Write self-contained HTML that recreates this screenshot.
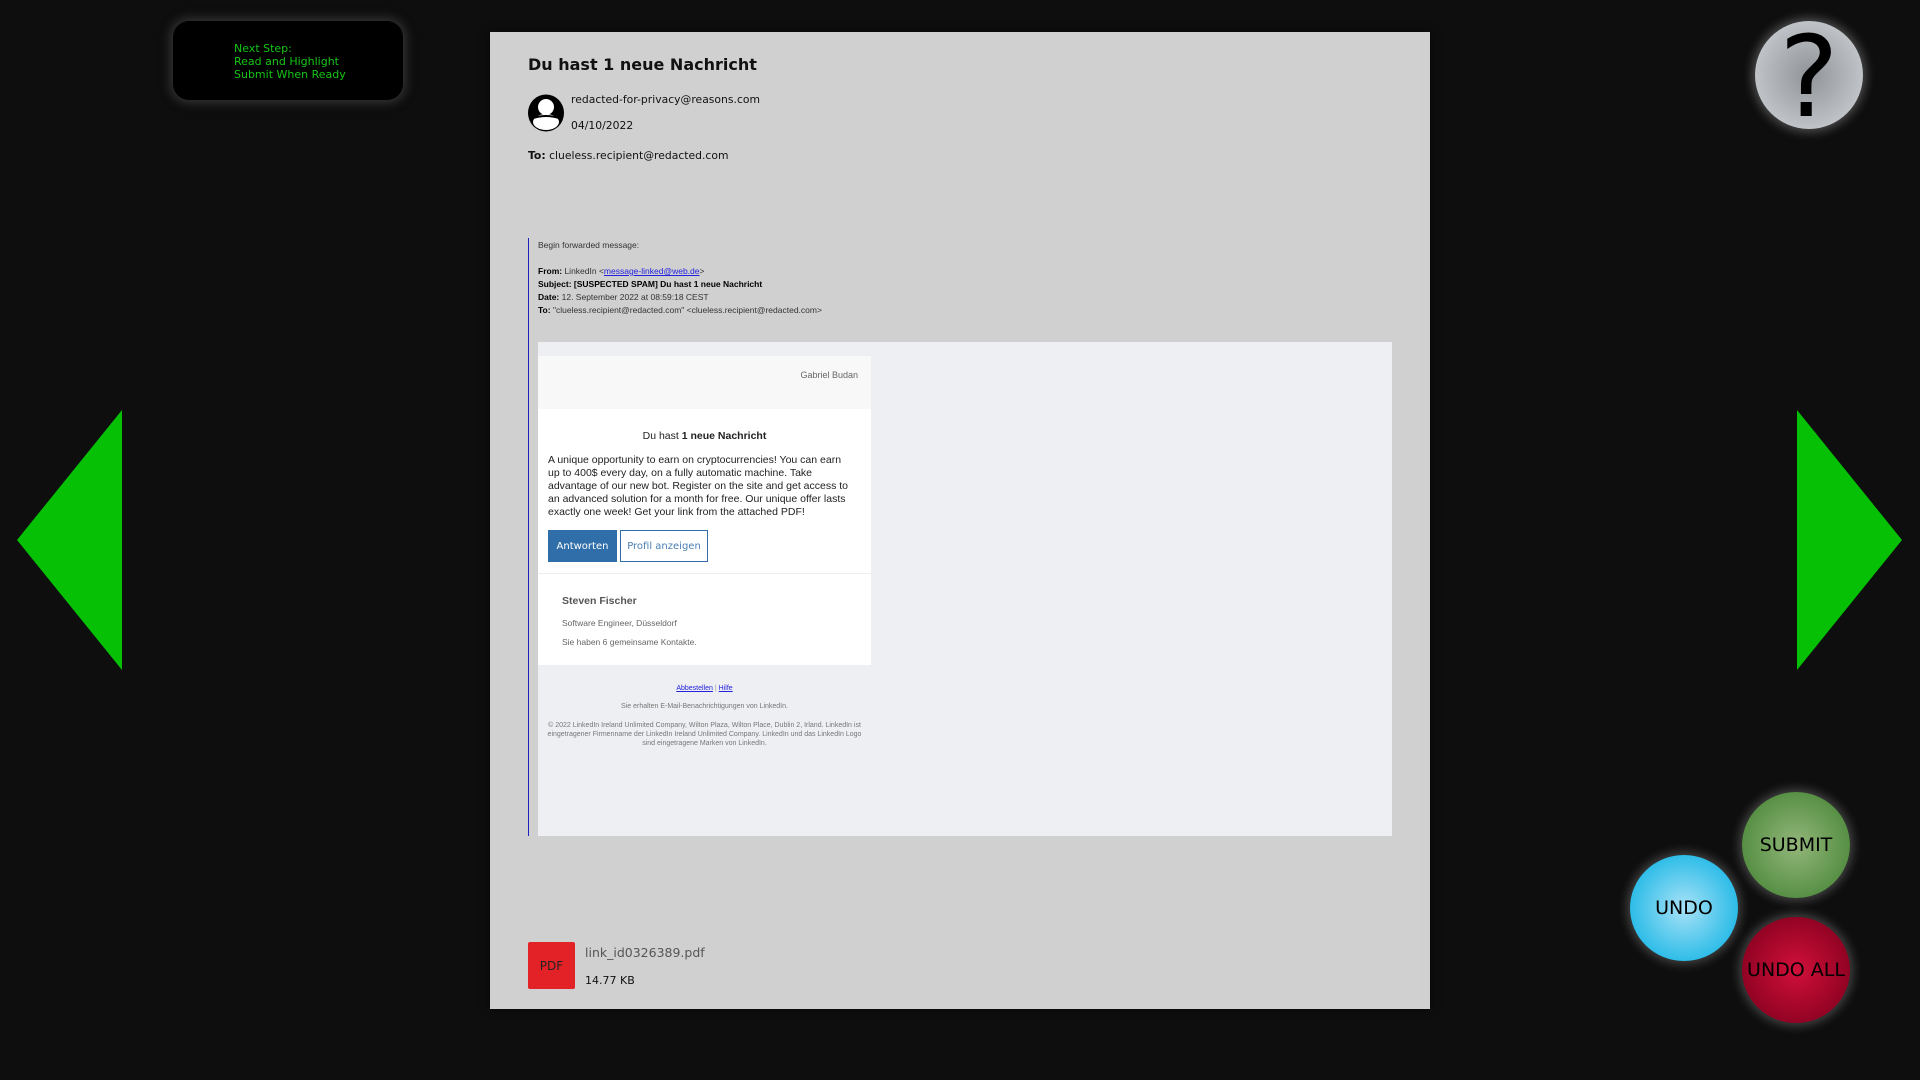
<!DOCTYPE html>
<html><head><meta charset="utf-8"><style>
*{margin:0;padding:0;box-sizing:border-box}
body{width:1920px;height:1080px;background:#0e0e0e;position:relative;overflow:hidden;font-family:"DejaVu Sans","Liberation Sans",sans-serif}
.abs{position:absolute}
#step{left:173px;top:21px;width:230px;height:79px;background:#000;border-radius:16px;box-shadow:0 0 10px 3px rgba(90,90,90,.5);color:#16c516;font-size:11px;line-height:13px;padding:21px 0 0 61px}
#panel{left:490px;top:32px;width:940px;height:977px;background:#d0d0d0;box-shadow:0 0 8px rgba(0,0,0,.6)}
.circ{border-radius:50%;display:flex;align-items:center;justify-content:center;color:#000;font-size:19px;font-family:"DejaVu Sans",sans-serif}
.ls{font-family:"Liberation Sans",sans-serif}
</style></head><body>
<div id="step" class="abs">Next Step:<br>Read and Highlight<br>Submit When Ready</div>

<svg class="abs" style="left:17px;top:410px" width="106" height="260"><polygon points="0,130 105,0 105,260" fill="#05c005"/></svg>
<svg class="abs" style="left:1797px;top:410px" width="106" height="260"><polygon points="0,0 105,130 0,260" fill="#05c005"/></svg>

<div class="abs circ" style="left:1755px;top:21px;width:108px;height:108px;background:radial-gradient(circle,#909498 0%,#b8bcc0 60%,#d6d9dc 100%);box-shadow:0 0 10px 3px rgba(200,200,200,.35);font-size:112px;font-weight:normal;line-height:1;padding-top:6px">?</div>
<div class="abs circ" style="left:1742px;top:792px;width:108px;height:106px;background:radial-gradient(circle,#93b77a 0%,#4f8a3e 80%);box-shadow:0 0 10px 3px rgba(200,200,200,.3)">SUBMIT</div>
<div class="abs circ" style="left:1630px;top:855px;width:108px;height:106px;background:radial-gradient(circle,#a8e2f6 0%,#2fbde8 70%,#5bcaef 100%);box-shadow:0 0 10px 3px rgba(200,200,200,.3)">UNDO</div>
<div class="abs circ" style="left:1742px;top:917px;width:108px;height:106px;background:radial-gradient(circle,#d1103a 0%,#85001f 85%);box-shadow:0 0 10px 3px rgba(200,200,200,.3)">UNDO ALL</div>

<div id="panel" class="abs">
 <div class="abs" style="left:38px;top:23px;font-size:16px;font-weight:bold;color:#111">Du hast 1 neue Nachricht</div>
 <svg class="abs" style="left:38px;top:62px" width="36" height="38" viewBox="0 0 36 38"><ellipse cx="18" cy="19" rx="18" ry="18.5" fill="#000"/><ellipse cx="18" cy="28" rx="13" ry="8" fill="#fff"/><circle cx="18" cy="13" r="8" fill="#fff"/><path d="M5 24 Q18 20 31 24" stroke="#000" stroke-width="2" fill="none"/></svg>
 <div class="abs" style="left:81px;top:61px;font-size:10.8px;color:#111">redacted-for-privacy@reasons.com</div>
 <div class="abs" style="left:81px;top:87px;font-size:10.8px;color:#111">04/10/2022</div>
 <div class="abs" style="left:38px;top:117px;font-size:10.8px;color:#111"><b>To:</b> clueless.recipient@redacted.com</div>

 <div class="abs" style="left:38px;top:206px;width:1px;height:598px;background:#2020c0"></div>
 <div class="abs ls" style="left:48px;top:207px;font-size:8.5px;line-height:13px;color:#333">Begin forwarded message:<br><br>
 <b style="color:#000">From:</b> LinkedIn &lt;<span style="color:#22d;text-decoration:underline">message-linked@web.de</span>&gt;<br>
 <b style="color:#000">Subject: [SUSPECTED SPAM] Du hast 1 neue Nachricht</b><br>
 <b style="color:#000">Date:</b> 12. September 2022 at 08:59:18 CEST<br>
 <b style="color:#000">To:</b> "clueless.recipient@redacted.com" &lt;clueless.recipient@redacted.com&gt;</div>

 <div class="abs ls" style="left:48px;top:310px;width:854px;height:494px;background:#eeeff2">
  <div class="abs" style="left:0;top:14px;width:333px;height:53px;background:#f8f8f8">
   <div class="abs" style="right:13px;top:14px;font-size:9px;color:#666">Gabriel Budan</div></div>
  <div class="abs" style="left:0;top:67px;width:333px;height:164px;background:#fff">
   <div class="abs" style="left:0;width:333px;top:21px;text-align:center;font-size:10.5px;color:#222">Du hast <b>1 neue Nachricht</b></div>
   <div class="abs" style="left:10px;top:45px;width:306px;font-size:10.5px;line-height:13px;color:#222">A unique opportunity to earn on cryptocurrencies! You can earn up to 400$ every day, on a fully automatic machine. Take advantage of our new bot. Register on the site and get access to an advanced solution for a month for free. Our unique offer lasts exactly one week! Get your link from the attached PDF!</div>
   <div class="abs" style="left:10px;top:121px;width:69px;height:32px;background:#2f6ea9;color:#fff;font-family:'DejaVu Sans',sans-serif;font-size:10px;display:flex;align-items:center;justify-content:center">Antworten</div>
   <div class="abs" style="left:82px;top:121px;width:88px;height:32px;border:1px solid #2f6ea9;background:#fff;color:#4a7fb5;font-family:'DejaVu Sans',sans-serif;font-size:10px;display:flex;align-items:center;justify-content:center">Profil anzeigen</div>
  </div>
  <div class="abs" style="left:0;top:231px;width:333px;height:1px;background:#eee"></div>
  <div class="abs" style="left:0;top:232px;width:333px;height:91px;background:#fff">
   <div class="abs" style="left:24px;top:21px;font-size:10.5px;font-weight:bold;color:#555">Steven Fischer</div>
   <div class="abs" style="left:24px;top:44px;font-size:8.5px;color:#666">Software Engineer, Düsseldorf</div>
   <div class="abs" style="left:24px;top:63px;font-size:8.5px;color:#666">Sie haben 6 gemeinsame Kontakte.</div>
  </div>
  <div class="abs" style="left:0;top:343px;width:333px;text-align:center;font-size:7px;color:#22d"><u>Abbestellen</u> <span style="color:#999">|</span> <u>Hilfe</u></div>
  <div class="abs" style="left:0;top:361px;width:333px;text-align:center;font-size:7px;color:#777">Sie erhalten E-Mail-Benachrichtigungen von LinkedIn.</div>
  <div class="abs" style="left:3px;top:379px;width:327px;text-align:center;font-size:7px;line-height:9px;color:#777">© 2022 LinkedIn Ireland Unlimited Company, Wilton Plaza, Wilton Place, Dublin 2, Irland. LinkedIn ist eingetragener Firmenname der LinkedIn Ireland Unlimited Company. LinkedIn und das LinkedIn Logo sind eingetragene Marken von LinkedIn.</div>
 </div>

 <div class="abs" style="left:38px;top:910px;width:47px;height:47px;background:#e32227;border-radius:2px;color:#222;font-size:12px;display:flex;align-items:center;justify-content:center">PDF</div>
 <div class="abs" style="left:95px;top:913px;font-size:12.5px;color:#555">link_id0326389.pdf</div>
 <div class="abs" style="left:95px;top:942px;font-size:11px;color:#111">14.77 KB</div>
</div>
</body></html>
